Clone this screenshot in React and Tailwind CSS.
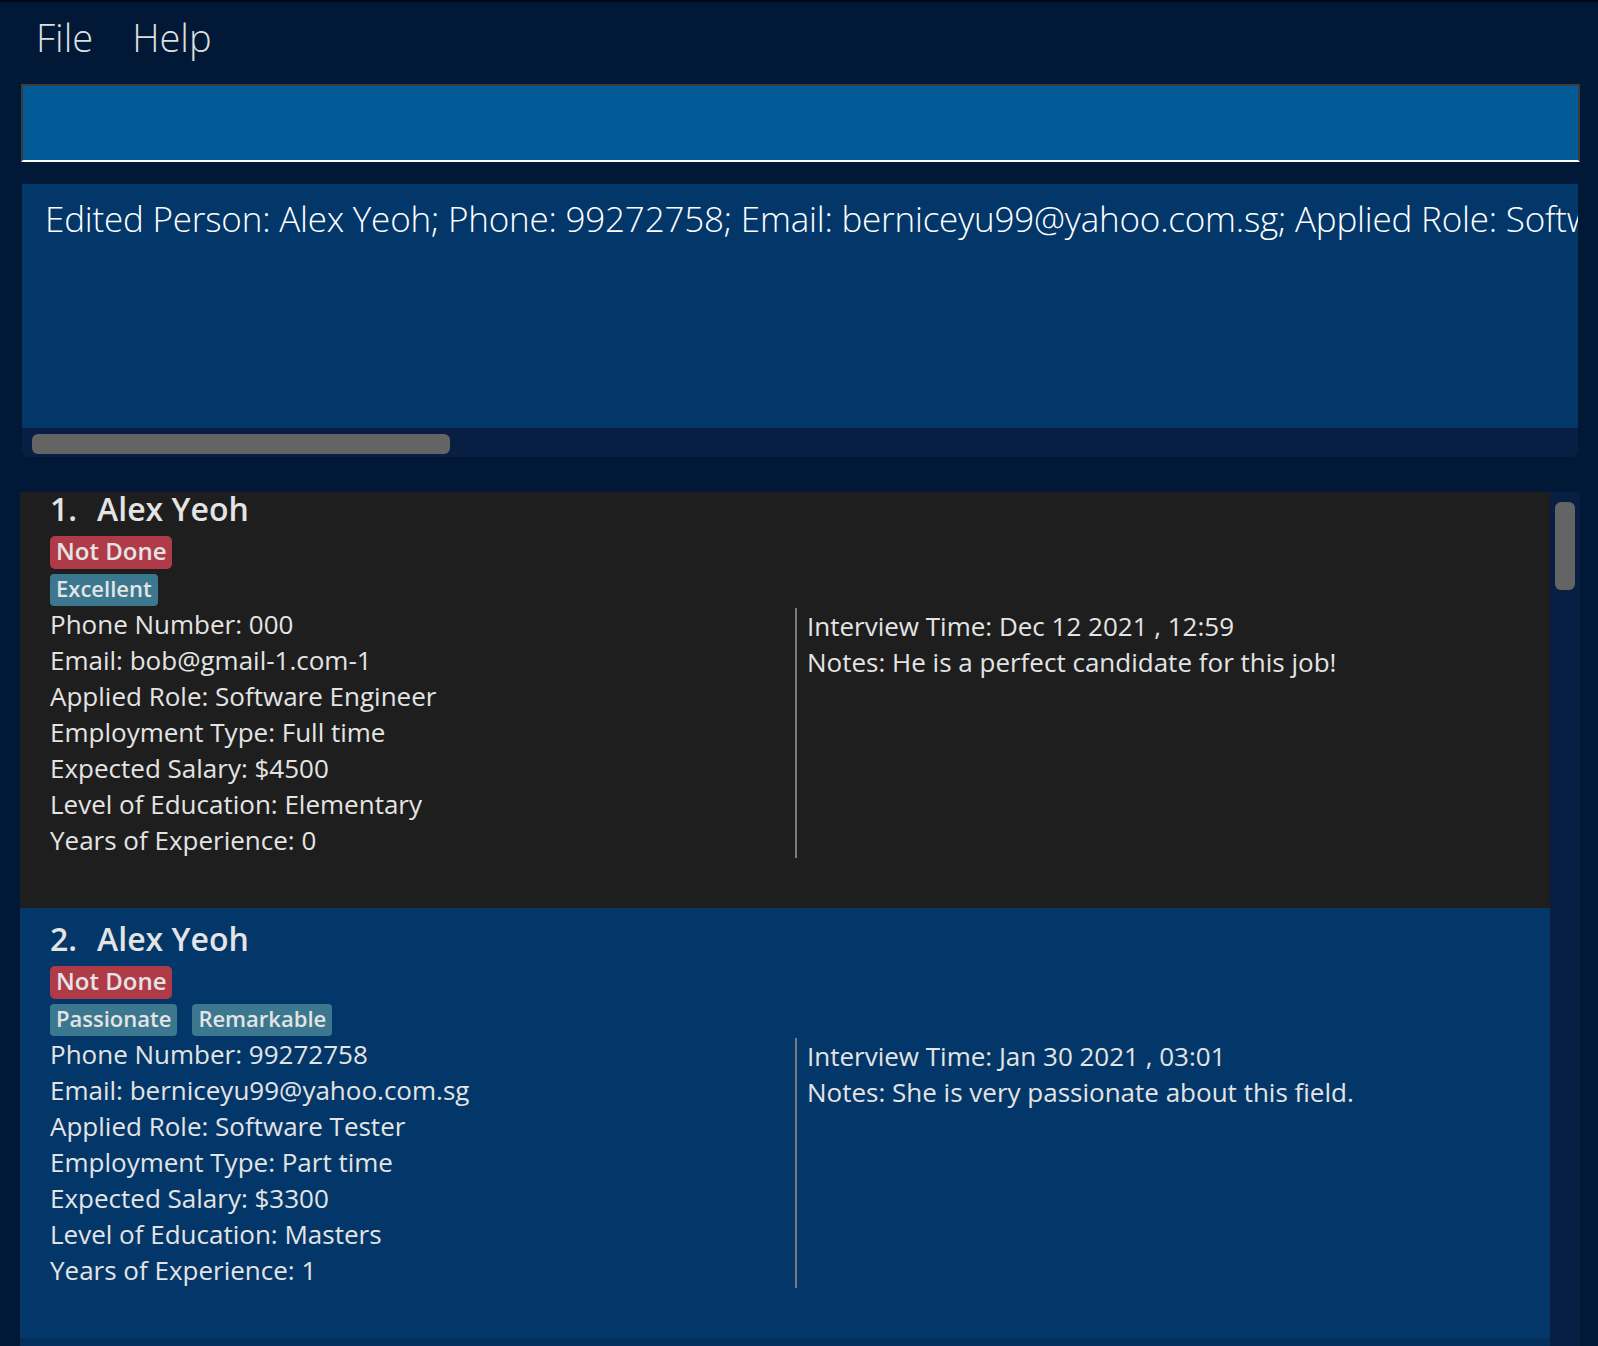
const candidates = [
  {
    index: 1,
    name: "Alex Yeoh",
    status: "Not Done",
    tags: ["Excellent"],
    bg: "bg-[#1e1e1e]",
    details: [
      "Phone Number: 000",
      "Email: bob@gmail-1.com-1",
      "Applied Role: Software Engineer",
      "Employment Type: Full time",
      "Expected Salary: $4500",
      "Level of Education: Elementary",
      "Years of Experience: 0",
    ],
    interview: "Interview Time: Dec 12 2021 , 12:59",
    notes: "Notes: He is a perfect candidate for this job!",
  },
  {
    index: 2,
    name: "Alex Yeoh",
    status: "Not Done",
    tags: ["Passionate", "Remarkable"],
    bg: "bg-[#033769]",
    details: [
      "Phone Number: 99272758",
      "Email: berniceyu99@yahoo.com.sg",
      "Applied Role: Software Tester",
      "Employment Type: Part time",
      "Expected Salary: $3300",
      "Level of Education: Masters",
      "Years of Experience: 1",
    ],
    interview: "Interview Time: Jan 30 2021 , 03:01",
    notes: "Notes: She is very passionate about this field.",
  },
];

const PersonCard = ({ person }) => {
  return (
    <div className={`${person.bg} h-[430px] pl-[30px] pt-[8px] text-[#e4e4e4]`}>
      <h2 className="text-[32px] leading-[45px] font-semibold whitespace-nowrap">
        <span>{person.index}.</span>
        <span className="ml-[20px]">{person.name}</span>
      </h2>
      <div className="flex mt-[5px]">
        <span className="h-[33px] px-[6px] pb-[3px] flex items-center rounded-[5px] bg-[#b03b48] text-[24px] font-semibold">
          {person.status}
        </span>
      </div>
      <div className="flex gap-[15px] mt-[5px]">
        {person.tags.map((tag) => (
          <span
            key={tag}
            className="h-[32px] px-[6px] pb-[4px] flex items-center rounded-[4px] bg-[#3b778e] text-[22px] font-semibold"
          >
            {tag}
          </span>
        ))}
      </div>
      <div className="flex text-[26px] leading-[36px]">
        <div className="w-[745px]">
          {person.details.map((line) => (
            <div key={line} className="whitespace-nowrap">
              {line}
            </div>
          ))}
        </div>
        <div className="border-l-2 border-[#7b7b7b] pl-[10px] mt-[2px]">
          <div>{person.interview}</div>
          <div>{person.notes}</div>
        </div>
      </div>
    </div>
  );
};

export default function App() {
  return (
    <div
      className="w-[1598px] h-[1346px] bg-[#011936] border-t-2 border-[#000812] overflow-hidden"
      style={{ fontFamily: '"Open Sans", "Noto Sans", sans-serif' }}
    >
      {/* menu bar */}
      <div className="h-[82px] flex items-start pt-[7px] pl-[36px] gap-[39px] text-[38px] font-light text-[#dedede]">
        <span>File</span>
        <span>Help</span>
      </div>

      {/* command box */}
      <div className="ml-[21px] w-[1559px] h-[78px] bg-[#025a97] border-2 border-[#3c3c3c] border-b-white" />

      {/* result display */}
      <div className="ml-[22px] mt-[22px] w-[1556px] h-[273px] flex flex-col rounded-b-[6px] overflow-hidden">
        <div className="h-[244px] bg-[#033769] pl-[23px] pt-[9px] overflow-hidden">
          <p className="text-[35px] tracking-[-0.2px] font-light text-white whitespace-nowrap">
            Edited Person: Alex Yeoh; Phone: 99272758; Email: berniceyu99@yahoo.com.sg; Applied Role: Software Tester; Employment Type: Part time
          </p>
        </div>
        <div className="flex-1 bg-[#081e43] pl-[10px] pt-[6px]">
          <div className="w-[418px] h-[20px] rounded-[6px] bg-[#646464]" />
        </div>
      </div>

      {/* person list */}
      <div className="ml-[20px] mt-[35px] w-[1560px] h-[854px] flex">
        <div className="w-[1530px] bg-[#032f5e] overflow-hidden">
          <div className="-mt-[14px]">
            {candidates.map((person) => (
              <PersonCard key={person.index} person={person} />
            ))}
          </div>
        </div>
        <div className="flex-1 bg-[#081e43] pt-[10px] flex justify-center">
          <div className="w-[20px] h-[88px] rounded-[6px] bg-[#646464]" />
        </div>
      </div>
    </div>
  );
}
